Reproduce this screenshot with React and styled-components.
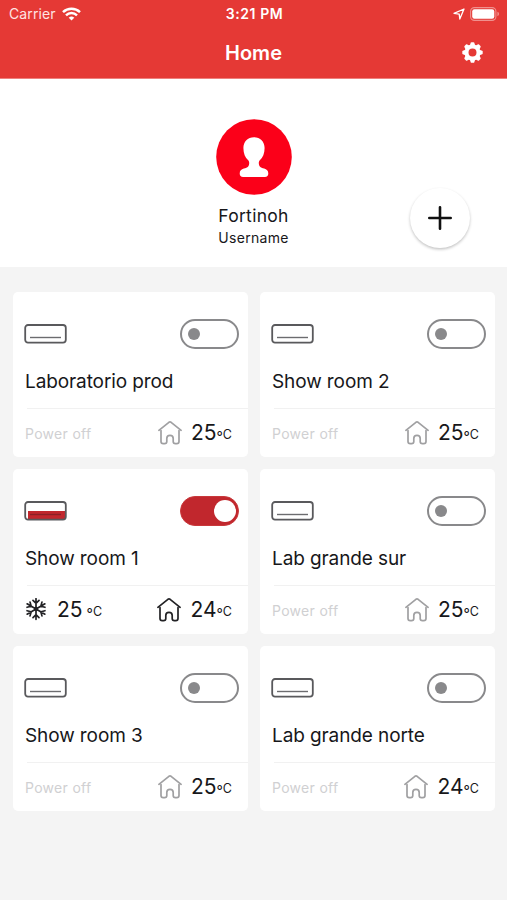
import React, { useState } from 'react';
import styled, { createGlobalStyle } from 'styled-components';

const GlobalStyle = createGlobalStyle`
  * {
    box-sizing: border-box;
  }

  body {
    margin: 0;
    background: #f4f4f4;
    font-family: Inter, 'Liberation Sans', sans-serif;
    color: #17171a;
  }

  svg {
    display: block;
    flex-shrink: 0;
  }
`;

const Screen = styled.div`
  width: 507px;
  height: 900px;
  overflow: hidden;
  background: #f4f4f4;
`;

const Header = styled.header`
  height: 79px;
  background: #e53935;
  border-bottom: 1px solid #ee807d;
  color: #fff;
`;

const StatusBar = styled.div`
  display: grid;
  grid-template-columns: 1fr auto 1fr;
  align-items: center;
  height: 27px;
  padding: 0 7px 0 9px;
`;

const Carrier = styled.div`
  display: flex;
  align-items: center;
  gap: 6px;
  font-size: 14px;
  letter-spacing: 0.1px;
  color: #ffe3e2;
`;

const Clock = styled.div`
  font-size: 14px;
  font-weight: 600;
  letter-spacing: 0.6px;
  white-space: nowrap;
`;

const StatusIcons = styled.div`
  display: flex;
  justify-content: flex-end;
  align-items: center;
  gap: 5px;
`;

const NavBar = styled.div`
  display: grid;
  grid-template-columns: 1fr auto 1fr;
  align-items: center;
  height: 51px;
  padding: 0 24px;
`;

const NavTitle = styled.h1`
  grid-column: 2;
  margin: 0;
  font-size: 20px;
  font-weight: 600;
`;

const IconButton = styled.button`
  justify-self: end;
  padding: 0;
  border: none;
  background: none;
  color: #fff;
`;

const Profile = styled.section`
  display: grid;
  grid-template-columns: 1fr auto 1fr;
  height: 188px;
  padding: 40px 37px 0;
  background: #fff;
`;

const ProfileInfo = styled.div`
  grid-column: 2;
  display: flex;
  flex-direction: column;
  align-items: center;
`;

const ProfileName = styled.div`
  margin-top: 9px;
  font-size: 17.5px;
  line-height: 24px;
  letter-spacing: 0.3px;
`;

const ProfileRole = styled.div`
  font-size: 14px;
  line-height: 20px;
  letter-spacing: 0.3px;
`;

const AddButton = styled.button`
  justify-self: end;
  display: flex;
  align-items: center;
  justify-content: center;
  width: 60px;
  height: 60px;
  margin-top: 69px;
  padding: 0;
  border: none;
  border-radius: 50%;
  background: #fff;
  box-shadow: 0 1.5px 3px rgba(0, 0, 0, 0.24);
`;

const DeviceGrid = styled.main`
  display: grid;
  grid-template-columns: 235px 235px;
  gap: 12px;
  padding: 25px 13px;
`;

const Card = styled.article`
  height: 165px;
  border-radius: 5px;
  background: #fff;
`;

const CardTop = styled.div`
  display: flex;
  justify-content: space-between;
  align-items: center;
  height: 84px;
  padding: 0 9px 0 11px;
`;

const CardTitle = styled.h2`
  height: 32px;
  margin: 0 0 0 12px;
  font-size: 19px;
  font-weight: 400;
  line-height: 11px;
  letter-spacing: -0.1px;
  white-space: nowrap;
`;

const CardBottom = styled.div`
  display: flex;
  justify-content: space-between;
  align-items: center;
  height: 49px;
  margin-left: 14px;
  padding-right: 16px;
  border-top: 1px solid #f1f1f1;
`;

const Switch = styled.button`
  display: flex;
  align-items: center;
  justify-content: ${props => props.$on ? 'flex-end' : 'flex-start'};
  width: 59px;
  height: 30px;
  padding: ${props => props.$on ? '0 2px' : '0 6px'};
  border: ${props => props.$on ? '1px solid #c9383b' : '2px solid #89898b'};
  border-radius: 15px;
  background: ${props => props.$on ? '#c1272d' : '#fff'};
`;

const Knob = styled.span`
  width: ${props => props.$on ? 22 : 12}px;
  height: ${props => props.$on ? 22 : 12}px;
  border-radius: 50%;
  background: ${props => props.$on ? '#fff' : '#89898b'};
`;

const PowerOff = styled.span`
  margin-left: -2px;
  padding-top: 1px;
  font-size: 14px;
  letter-spacing: 0.3px;
  color: #d0d0d2;
`;

const Reading = styled.div`
  display: flex;
  align-items: center;
  margin-left: ${props => props.$target ? -2 : 0}px;
  color: ${props => props.$muted ? '#a0a0a2' : '#222225'};
`;

const Temperature = styled.span`
  display: flex;
  align-items: center;
  margin-left: ${props => props.$target ? 10 : 9}px;
  color: #17171a;
  font-size: 21px;
  line-height: 26px;
`;

const Unit = styled.span`
  display: flex;
  margin-left: ${props => props.$target ? 4 : 0}px;
  padding-top: 5px;
  font-size: 12.5px;
  line-height: 22px;
`;

const Degree = styled.span`
  padding-top: 2px;
  font-size: 14px;
`;

const WifiIcon = () => (
  <svg width="19" height="14" viewBox="0 0 19 14" fill="none" stroke="#fff" strokeWidth="2.5">
    <path d="M1 5.2a12.3 12.3 0 0 1 17 0" />
    <path d="M4 8.3a8 8 0 0 1 11 0" />
    <path d="M6.7 10.7a4.1 4.1 0 0 1 5.6 0L9.5 13.6z" fill="#fff" stroke="none" />
  </svg>
);

const LocationIcon = () => (
  <svg width="12" height="12" viewBox="0 0 12 12" fill="none" stroke="#fff" strokeWidth="1.3" strokeLinejoin="round">
    <path d="M11 1 1 5.3l5.2.8.6 4.9z" />
  </svg>
);

const BatteryIcon = () => (
  <svg width="30" height="14" viewBox="0 0 30 14">
    <rect x=".6" y=".6" width="25.3" height="12.8" rx="3.8" fill="none" stroke="#f0918e" strokeWidth="1.1" />
    <rect x="2.2" y="2.2" width="22.1" height="9.6" rx="2.2" fill="#fff" />
    <path d="M27.4 4.8v4.4q1.7-.6 1.7-2.2t-1.7-2.2z" fill="#f0918e" />
  </svg>
);

const TEETH = [0, 45, 90, 135, 180, 225, 270, 315];

const GearIcon = () => (
  <svg width="21" height="21" viewBox="-10.5 -10.5 21 21">
    <circle r="6" fill="none" stroke="#fff" strokeWidth="4" />
    {TEETH.map(angle => (
      <path
        key={angle}
        d="M-2.7-7l.9-2.7q.2-.5.8-.5h2q.6 0 .8.5l.9 2.7z"
        fill="#fff"
        transform={`rotate(${angle})`}
      />
    ))}
  </svg>
);

const Avatar = () => (
  <svg width="76" height="76" viewBox="0 0 76 76">
    <circle cx="38" cy="38" r="37.8" fill="#fb0019" />
    <path
      d="M38 18.2c-6.3 0-10.6 4.5-10.6 10.7 0 5.5 1.7 9.6 4.8 12.4 1.3 1.3 1.4 4.4 0 6.1-1 1.2-2.6 1.7-4.3 2.2-2.6.8-4.2 2.2-4.2 4.9 0 2.3 1.2 3.4 3.4 3.4h21.8c2.2 0 3.4-1.1 3.4-3.4 0-2.7-1.6-4.1-4.2-4.9-1.7-.5-3.3-1-4.3-2.2-1.4-1.7-1.3-4.8 0-6.1 3.1-2.8 4.8-6.9 4.8-12.4 0-6.2-4.3-10.7-10.6-10.7z"
      fill="#fff"
    />
  </svg>
);

const PlusIcon = () => (
  <svg width="24" height="24" viewBox="0 0 24 24" stroke="#111" strokeWidth="2.6" strokeLinecap="round">
    <path d="M12 1.3v21.4M1.3 12h21.4" />
  </svg>
);

const AirConditionerIcon = ({ on }) => (
  <svg width="43" height="20" viewBox="0 0 43 20">
    {on && <path d="M4 10h38v6q0 2.7-2.7 2.7H4z" fill="#c1272d" />}
    <rect x="1.2" y="1" width="40.6" height="17.6" rx="2.8" fill="none" stroke="#59595c" strokeWidth="1.8" />
    <path d="M6 13.5h31" stroke={on ? '#8c2026' : '#6c6c6f'} strokeWidth="1.4" />
  </svg>
);

const HouseIcon = () => (
  <svg width="24" height="24" viewBox="0 0 24 24" fill="none" stroke="currentColor" strokeWidth="1.7" strokeLinecap="round" strokeLinejoin="round">
    <path d="M.9 9.3 10.9 1.3q1.1-.8 2.2 0L23.1 9.3" />
    <path d="M3 9.6v10.8q0 2.2 2.2 2.2h1.4q2.2 0 2.2-2.2v-2.8a3.2 3.2 0 0 1 6.4 0v2.8q0 2.2 2.2 2.2h1.4q2.2 0 2.2-2.2V9.6" />
  </svg>
);

const SnowflakeIcon = () => (
  <svg width="22" height="24" viewBox="-11 -11 22 24" fill="none" stroke="currentColor" strokeWidth="1.7" strokeLinecap="round">
    {[0, 60, 120, 180, 240, 300].map(angle => (
      <path key={angle} d="M0 0v-10.3M-3-8.6 0-5.6 3-8.6" transform={`rotate(${angle})`} />
    ))}
    <circle r="2.2" fill="currentColor" stroke="none" />
  </svg>
);

const initialDevices = [
  { id: 1, name: 'Laboratorio prod', on: false, room: 25 },
  { id: 2, name: 'Show room 2', on: false, room: 25 },
  { id: 3, name: 'Show room 1', on: true, room: 24, target: 25 },
  { id: 4, name: 'Lab grande sur', on: false, room: 25 },
  { id: 5, name: 'Show room 3', on: false, room: 25 },
  { id: 6, name: 'Lab grande norte', on: false, room: 24 },
];

function DeviceCard({ device, onToggle }) {
  return (
    <Card>
      <CardTop>
        <AirConditionerIcon on={device.on} />
        <Switch $on={device.on} aria-label={device.name} onClick={() => onToggle(device.id)}>
          <Knob $on={device.on} />
        </Switch>
      </CardTop>
      <CardTitle>{device.name}</CardTitle>
      <CardBottom>
        {device.on ? (
          <Reading $target>
            <SnowflakeIcon />
            <Temperature $target>
              {device.target || 25}
              <Unit $target><Degree>°</Degree>C</Unit>
            </Temperature>
          </Reading>
        ) : (
          <PowerOff>Power off</PowerOff>
        )}
        <Reading $muted={!device.on}>
          <HouseIcon />
          <Temperature>
            {device.room}
            <Unit><Degree>°</Degree>C</Unit>
          </Temperature>
        </Reading>
      </CardBottom>
    </Card>
  );
}

function App() {
  const [devices, setDevices] = useState(initialDevices);

  const handleToggle = (id) => {
    setDevices(devices.map(d => (d.id === id ? { ...d, on: !d.on } : d)));
  };

  return (
    <Screen>
      <GlobalStyle />
      <Header>
        <StatusBar>
          <Carrier>
            Carrier
            <WifiIcon />
          </Carrier>
          <Clock>3:21 PM</Clock>
          <StatusIcons>
            <LocationIcon />
            <BatteryIcon />
          </StatusIcons>
        </StatusBar>
        <NavBar>
          <NavTitle>Home</NavTitle>
          <IconButton aria-label="Settings">
            <GearIcon />
          </IconButton>
        </NavBar>
      </Header>
      <Profile>
        <ProfileInfo>
          <Avatar />
          <ProfileName>Fortinoh</ProfileName>
          <ProfileRole>Username</ProfileRole>
        </ProfileInfo>
        <AddButton aria-label="Add device">
          <PlusIcon />
        </AddButton>
      </Profile>
      <DeviceGrid>
        {devices.map(device => (
          <DeviceCard key={device.id} device={device} onToggle={handleToggle} />
        ))}
      </DeviceGrid>
    </Screen>
  );
}

export default App;
